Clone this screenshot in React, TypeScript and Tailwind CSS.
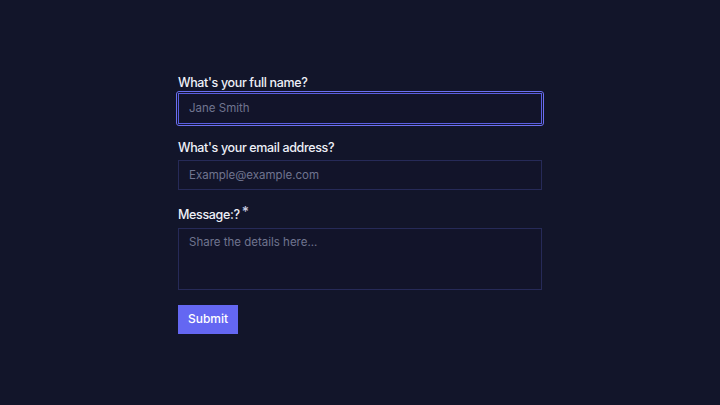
import React from 'react';

export default function App() {
  return (
    <div
      className="flex h-[405px] w-full items-center justify-center bg-[#12152a] pt-[2px]"
      style={{ fontFamily: 'Inter, "Noto Sans", sans-serif' }}
    >
      <form className="flex w-[364px] flex-col" onSubmit={(e) => e.preventDefault()}>
        <label className="mb-[1px] text-[12.5px] font-medium leading-[18px] tracking-[-0.35px] text-[#eef0f8]">
          What's your full name?
        </label>
        <div className="rounded-[1px] outline outline-1 outline-offset-1 outline-[#6b6ff0]">
          <input
            className="h-[31px] w-full border border-[#5a5ee0] bg-[#12142a] px-[10px] text-[11.5px] text-white placeholder:text-[#70748f] focus:outline-none"
            placeholder="Jane Smith"
          />
        </div>

        <label className="mb-[3px] mt-[15px] text-[12.5px] font-medium leading-[18px] tracking-[-0.35px] text-[#eef0f8]">
          What's your email address?
        </label>
        <input
          className="h-[30px] w-full border border-[#262a58] bg-[#12142a] px-[10px] text-[11.5px] text-white placeholder:text-[#70748f] focus:outline-none"
          placeholder="Example@example.com"
        />

        <label className="mb-[4px] mt-[16px] flex items-start text-[12.5px] font-medium leading-[18px] tracking-[-0.35px] text-[#eef0f8]">
          Message:?<span className="ml-[2px] -mt-[3px] text-[14px] text-[#c9cbe0]">*</span>
        </label>
        <textarea
          className="h-[62px] w-full resize-none border border-[#262a58] bg-[#12142a] px-[10px] py-[5px] text-[11.5px] text-white placeholder:text-[#70748f] focus:outline-none"
          placeholder="Share the details here..."
        />

        <button
          type="submit"
          className="mt-[15px] h-[29px] w-[60px] bg-[#6467f2] text-[12px] font-medium text-white"
        >
          Submit
        </button>
      </form>
    </div>
  );
}
